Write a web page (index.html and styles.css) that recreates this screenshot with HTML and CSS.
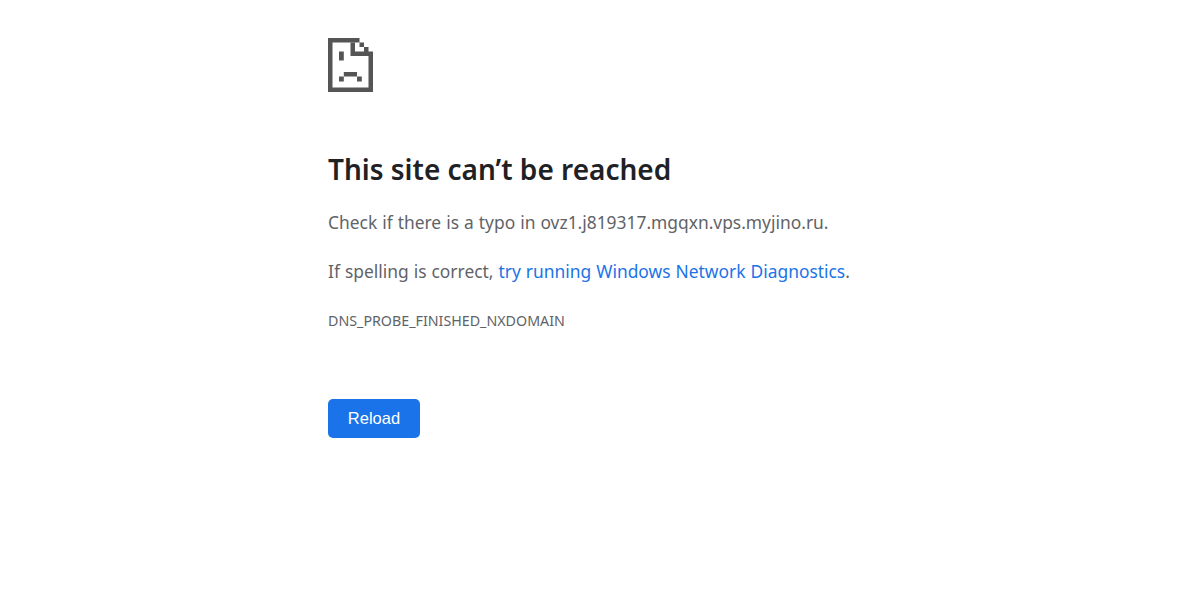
FILE: index.html

```html
<!DOCTYPE html>
<html lang="en">
<head>
    <meta charset="UTF-8">
    <title>This site can't be reached</title>
    <link rel="stylesheet" href="styles.css">
</head>
<body>

<div class="container">
    <svg class="icon" width="46" height="54" viewBox="0 0 46 54">
        <!-- page outline, 4.5px "pixels" -->
        <path fill="#555" d="M0 0H31.5V4.5H4.5V49.5H40.5V18H45V54H0Z"/>
        <!-- folded corner -->
        <path fill="#555" d="M22.5 4.5H27V13.5H45V18H22.5ZM31.5 4.5H36V9H31.5ZM36 9H40.5V13.5H36Z"/>
        <!-- eye and mouth -->
        <path fill="#555" d="M11 13.5H15.8V22.5H11ZM15.8 34H29V38.5H15.8ZM11 38.5H15.8V43.5H11ZM29 38.5H33.8V43.5H29Z"/>
    </svg>

    <h1>This site can’t be reached</h1>
    <p>Check if there is a typo in ovz1.j819317.mgqxn.vps.myjino.ru.</p>
    <p>If spelling is correct, <a href="#">try running Windows Network Diagnostics</a>.</p>
    <div class="error-code">DNS_PROBE_FINISHED_NXDOMAIN</div>

    <button class="reload">Reload</button>
</div>

</body>
</html>
```

FILE: styles.css

```css
body {
    font-family: "Noto Sans", "Open Sans", sans-serif;
    margin: 0;
    padding: 0;
    background-color: #ffffff;
    color: #5f6368;
}

.container {
    width: 536px;
    margin-left: 328px;
    padding-top: 38px;
}

.icon {
    display: block;
    margin-bottom: 59px;
}

h1 {
    margin: 0 0 19px;
    font-size: 28px;
    line-height: 36px;
    font-weight: 600;
    color: #202124;
}

p {
    margin: 0 0 16px;
    font-size: 17.4px;
    line-height: 33px;
    word-spacing: 0.5px;
}

a {
    color: #1a73e8;
    text-decoration: none;
}

.error-code {
    font-size: 14.25px;
    line-height: 18px;
    margin-top: 24px;
}

.reload {
    display: block;
    margin-top: 69px;
    width: 92px;
    height: 39px;
    border: none;
    border-radius: 5px;
    background: #1a73e8;
    color: #ffffff;
    font-family: "Liberation Sans", Arial, sans-serif;
    font-size: 16.5px;
}
```
